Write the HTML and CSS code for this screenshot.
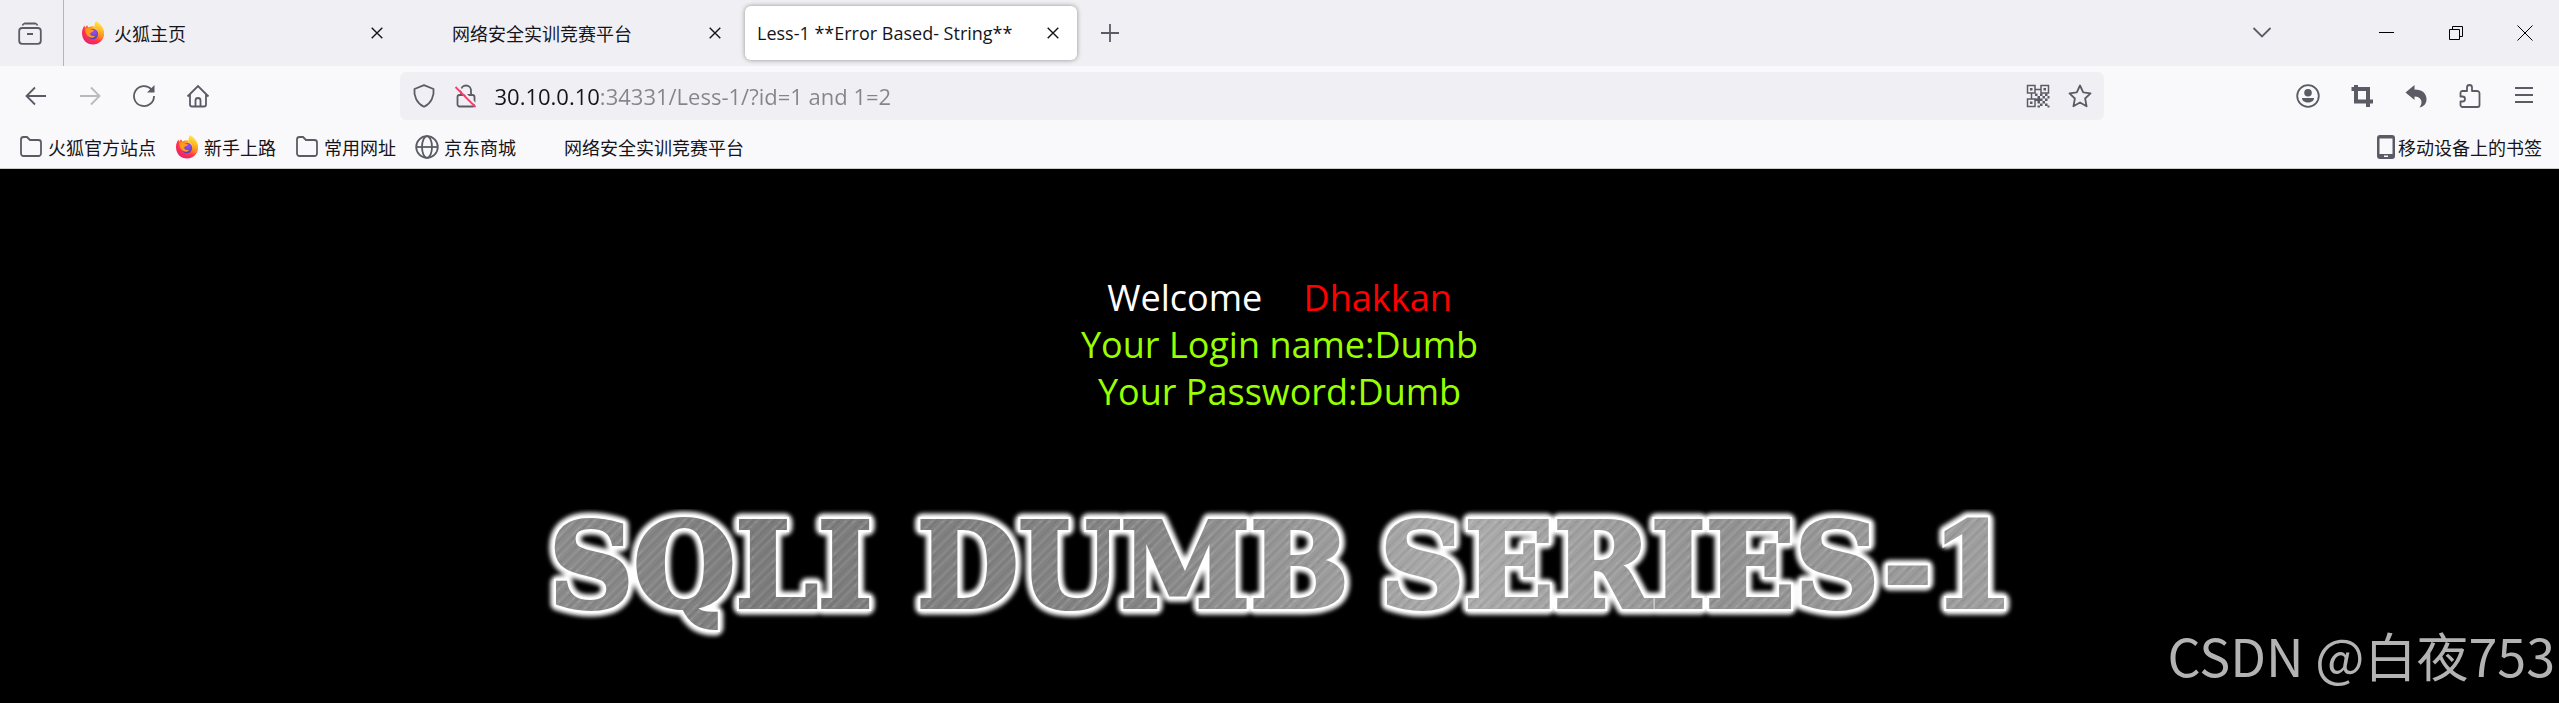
FILE: index.html
```
<!DOCTYPE html>
<html lang="zh-CN">
<head>
  <meta charset="UTF-8">
  <title>Less-1 **Error Based- String**</title>
  <meta name="viewport" content="width=device-width, initial-scale=1.0">
  <link rel="stylesheet" href="styles.css">
</head>

<body>

  <!-- Shared icons -->
  <svg class="sprite" width="0" height="0" aria-hidden="true">
    <defs>
      <radialGradient id="fox-body" cx="0.75" cy="0.15" r="1">
        <stop offset="0" stop-color="#fff44f"/>
        <stop offset="0.35" stop-color="#ff980e"/>
        <stop offset="0.65" stop-color="#ff3647"/>
        <stop offset="1" stop-color="#e31587"/>
      </radialGradient>
      <linearGradient id="fox-tail" x1="0.6" y1="0" x2="0.4" y2="1">
        <stop offset="0" stop-color="#fff44f"/>
        <stop offset="0.5" stop-color="#ffb31f"/>
        <stop offset="1" stop-color="#ff5634"/>
      </linearGradient>
      <radialGradient id="fox-globe" cx="0.6" cy="0.3" r="0.7">
        <stop offset="0" stop-color="#a34ce8"/>
        <stop offset="1" stop-color="#4b3fc4"/>
      </radialGradient>
    </defs>
    <symbol id="firefox" viewBox="0 0 24 24">
      <path fill="url(#fox-body)" d="M1 12C1 9 2 6.500 3.500 4.500L4 7L6 4.200L7.500 6.500C10 5 13 5 15 6L21 7C22.500 9 23 11 23 13C22.500 19 18 23.500 12 23.500S1 19 1 12z"/>
      <path fill="url(#fox-tail)" d="M15 0C19 2 23.500 7 23 13C22.500 17 20 19 17 20C20 15 18 10 14.500 7C13 5 13.500 2 15 0z"/>
      <circle cx="12" cy="13" r="5.200" fill="url(#fox-globe)"/>
      <path fill="#ff9a1e" d="M4 8C6 6 9 7 10 8.500L13 9C12.500 11 10 11 9.500 12C8.500 14 11 15.500 14 15C12 18.500 5 17 4 8z"/>
    </symbol>
    <symbol id="close" viewBox="0 0 12 12">
      <path d="M0.700 0.700L11.300 11.300M11.300 0.700L0.700 11.300" fill="none" stroke="currentColor" stroke-width="1.400"/>
    </symbol>
    <symbol id="folder" viewBox="0 0 24 24">
      <path d="M2 4.500a2.500 2.500 0 0 1 2.500-2.500h3.500l3 3h8.500a2.500 2.500 0 0 1 2.500 2.500v11a2.500 2.500 0 0 1-2.500 2.500h-15a2.500 2.500 0 0 1-2.500-2.500z" fill="none" stroke="currentColor" stroke-width="1.800"/>
    </symbol>
  </svg>

  <header class="browser">
    <div class="tab-bar">
      <button class="icon-btn all-tabs" aria-label="View tabs">
        <svg class="icon" viewBox="0 0 24 24"><path d="M4.500 4.500a3 3 0 0 1 2-2h11a3 3 0 0 1 2 2"/><rect x="1.200" y="7" width="21.600" height="15.800" rx="3"/><path d="M9 13h6" stroke-width="2"/></svg>
      </button>

      <div class="tabs">
        <div class="tab">
          <svg class="icon"><use href="#firefox"/></svg>
          <button class="tab-title">火狐主页</button>
          <button class="tab-close" aria-label="Close tab"><svg><use href="#close"/></svg></button>
        </div>
        <div class="tab indent">
          <button class="tab-title">网络安全实训竞赛平台</button>
          <button class="tab-close" aria-label="Close tab"><svg><use href="#close"/></svg></button>
        </div>
        <div class="tab active">
          <button class="tab-title">Less-1 **Error Based- String**</button>
          <button class="tab-close" aria-label="Close tab"><svg><use href="#close"/></svg></button>
        </div>
        <button class="icon-btn" aria-label="New tab">
          <svg class="icon" viewBox="0 0 24 24"><path d="M12 3v18M3 12h18"/></svg>
        </button>
      </div>

      <button class="icon-btn tab-list" aria-label="List all tabs">
        <svg class="icon" viewBox="0 0 24 24"><path d="M3.500 7l8.500 8.500L20.500 7"/></svg>
      </button>
      <div class="window-buttons">
        <button aria-label="Minimize"><svg viewBox="0 0 16 16"><path d="M0 7.500h15"/></svg></button>
        <button aria-label="Restore"><svg viewBox="0 0 16 16"><path d="M1.500 4.500h10v10h-10zM4.500 4.500v-3h10v10h-3"/></svg></button>
        <button aria-label="Close"><svg viewBox="0 0 16 16"><path d="M0.500 0.500l15 15M15.500 0.500l-15 15"/></svg></button>
      </div>
    </div>

    <div class="nav-bar">
      <div class="nav-buttons">
        <button class="icon-btn" aria-label="Back">
          <svg class="icon" viewBox="0 0 24 24"><path d="M22 12H3M11 3.500L2.500 12l8.500 8.500"/></svg>
        </button>
        <button class="icon-btn" aria-label="Forward" disabled>
          <svg class="icon" viewBox="0 0 24 24"><path d="M2 12h19M13 3.500l8.500 8.500-8.500 8.500"/></svg>
        </button>
        <button class="icon-btn" aria-label="Reload">
          <svg class="icon" viewBox="0 0 24 24"><path d="M19.500 5.500A10 10 0 1 0 22 12"/><path class="solid" d="M22.500 1v7.500H15z"/></svg>
        </button>
        <button class="icon-btn" aria-label="Home">
          <svg class="icon" viewBox="0 0 24 24"><path d="M1.500 12.500L12 2l10.500 10.500M4 10.500V20.500a2 2 0 0 0 2 2h12a2 2 0 0 0 2-2V10.500M9.500 22.500v-6a2.500 2.500 0 0 1 5 0v6"/></svg>
        </button>
      </div>

      <div class="url-bar">
        <svg class="icon" viewBox="0 0 24 24"><path d="M12 1.200L21.500 5C22.500 12 19 19.500 12 22.800C5 19.500 1.500 12 2.500 5z" stroke-linejoin="round"/></svg>
        <svg class="icon lock" viewBox="0 0 24 24"><path d="M7 11V6.500a5 5 0 0 1 10 0V11"/><rect x="3.500" y="11" width="17" height="11.500" rx="2"/><path class="gap" d="M4 2.500l19 19"/><path class="slash" d="M1.500 3l20 20"/></svg>
        <input class="url" type="text" aria-label="Address" value="30.10.0.10:34331/Less-1/?id=1 and 1=2">
        <svg class="icon qr" viewBox="0 0 24 24"><path d="M1.500 1.500h7.500v7.500H1.500zM15 1.500h7.500v7.500H15zM1.500 15h7.500v7.500H1.500zM9 5.500h6M5.500 9v6"/><path class="solid" d="M4 4h2.500v2.500H4zM17.500 4h2.500v2.500h-2.500zM4 17.500h2.500v2.500H4zM9 9.500h2.500v2.500H9zM14 9.500h2.500v2.500H14zM19 9.500h2.500v2.500H19zM11.500 12h2.500v2.500h-2.500zM16.500 12h2.500v2.500h-2.500zM21.500 12h2v2.500h-2zM9 14.500h5v2.500H9zM14 14.500h2.500v2.500H14zM19 14.500h2.500v2.500H19zM11.500 17h2.500v2.500h-2.500zM16.500 17h2.500v2.500h-2.500zM14 19.500h2.500v2.500H14zM19 19.500h2.500v2.500H19zM11.500 21.500h2.500v2h-2.500zM21.500 21.500h2v2h-2z"/></svg>
        <svg class="icon" viewBox="0 0 24 24"><path d="M12 1.500l3.200 6.900 7.300.900-5.400 5.200 1.500 7.800-6.600-3.800-6.600 3.800 1.500-7.800L1.500 9.300l7.300-.900z" stroke-linejoin="round"/></svg>
      </div>

      <div class="nav-tools">
        <button class="icon-btn" aria-label="Account">
          <svg class="icon" viewBox="0 0 24 24"><circle cx="12" cy="12" r="10.800"/><circle class="solid" cx="12" cy="8.800" r="3.800"/><path class="solid" d="M6 14h12c0 6-12 6-12 0z"/></svg>
        </button>
        <button class="icon-btn" aria-label="Screenshot">
          <svg class="icon" viewBox="0 0 24 24"><path d="M1.500 5H18v18M6 1v16.500h17" stroke-width="4"/></svg>
        </button>
        <button class="icon-btn" aria-label="Undo">
          <svg class="icon" viewBox="0 0 24 24"><path class="solid" d="M1.500 8.500L10.500 1v4.500c8 0 12 4 12 10 0 4-2.500 7-7 8 4-5 2-11-5-11V16z"/></svg>
        </button>
        <button class="icon-btn" aria-label="Extensions">
          <svg class="icon" viewBox="0 0 24 24"><path d="M9 7V3.500a2.500 2.500 0 0 1 5 0V7h5a2.500 2.500 0 0 1 2.500 2.500V21a2 2 0 0 1-2 2H4.500A2 2 0 0 1 2.500 21V17.500h2a2.500 2.500 0 0 0 0-5h-2V9a2 2 0 0 1 2-2z" stroke-linejoin="round"/></svg>
        </button>
        <button class="icon-btn" aria-label="Menu">
          <svg class="icon" viewBox="0 0 24 24"><path d="M3 4h18M3 11h18M3 18h18"/></svg>
        </button>
      </div>
    </div>

    <nav class="bookmarks">
      <a href="#"><svg class="icon"><use href="#folder"/></svg>火狐官方站点</a>
      <a href="#"><svg class="icon"><use href="#firefox"/></svg>新手上路</a>
      <a href="#"><svg class="icon"><use href="#folder"/></svg>常用网址</a>
      <a href="#"><svg class="icon" viewBox="0 0 24 24"><circle cx="12" cy="12" r="10.800"/><ellipse cx="12" cy="12" rx="5" ry="10.800"/><path d="M1 12h22"/></svg>京东商城</a>
      <a href="#" class="no-icon">网络安全实训竞赛平台</a>
      <a href="#" class="mobile"><svg class="icon" viewBox="0 0 20 24"><path class="solid" fill-rule="evenodd" d="M4 0h12a3 3 0 0 1 3 3v18a3 3 0 0 1-3 3H4a3 3 0 0 1-3-3V3a3 3 0 0 1 3-3zM3.500 3.500v15.500h13V3.500zM8 20.500v1.500h4v-1.500z"/></svg>移动设备上的书签</a>
    </nav>
  </header>

  <main class="page">
    <div class="welcome">
      <p>Welcome <span class="name">Dhakkan</span></p>
      <p class="login">Your Login name:Dumb</p>
      <p class="login">Your Password:Dumb</p>
    </div>

    <svg class="banner" viewBox="0 0 1500 140" role="img" aria-label="SQLI DUMB SERIES-1">
      <defs>
        <linearGradient id="steel" gradientUnits="userSpaceOnUse" x1="20" y1="0" x2="1490" y2="0">
          <stop offset="0" stop-color="#8c8c8c"/>
          <stop offset="0.150" stop-color="#7c7c7c"/>
          <stop offset="0.400" stop-color="#858585"/>
          <stop offset="0.620" stop-color="#acacac"/>
          <stop offset="0.800" stop-color="#929292"/>
          <stop offset="1" stop-color="#a0a0a0"/>
        </linearGradient>
        <pattern id="brushed" width="23" height="60" patternUnits="userSpaceOnUse" patternTransform="rotate(45)">
          <path d="M2 0v60M8 0v60M17 0v60" stroke="#fff" stroke-opacity="0.140"/>
          <path d="M5 0v60M13 0v60M20 0v60" stroke="#000" stroke-opacity="0.080"/>
        </pattern>
        <filter id="glow" x="-5%" y="-20%" width="110%" height="140%">
          <feGaussianBlur stdDeviation="2"/>
        </filter>
        <g id="words">
          <text x="19" y="98">SQLI</text>
          <text x="387" y="98">DUMB</text>
          <text x="850" y="98">SERIES-1</text>
        </g>
      </defs>
      <use href="#words" class="banner-glow" filter="url(#glow)"/>
      <use href="#words" class="banner-edge"/>
      <use href="#words" class="banner-face"/>
      <use href="#words" class="banner-brush"/>
    </svg>

    <div class="watermark">CSDN @白夜753</div>
  </main>

</body>
</html>
```

FILE: styles.css
```
:root {
  --tab-bg: #f0f0f4;
  --toolbar-bg: #f9f9fb;
  --text-color: #15141a;
  --icon-color: #5b5b66;
}

* {
  box-sizing: border-box;
}

body {
  margin: 0;
  min-height: 100vh;
  display: flex;
  flex-direction: column;
  background: #000;
  color: var(--text-color);
  font-family: "Open Sans", "Noto Sans CJK SC", sans-serif;
  font-size: 18px;
}

button {
  margin: 0;
  padding: 0;
  border: none;
  background: none;
  color: inherit;
  font: inherit;
}

.sprite {
  position: absolute;
}

.icon {
  width: 24px;
  height: 24px;
  flex-shrink: 0;
  fill: none;
  stroke: var(--icon-color);
  stroke-width: 1.8;
  color: var(--icon-color);
}

.icon use {
  stroke: none;
}

.icon .solid {
  fill: var(--icon-color);
  stroke: none;
}

.icon-btn {
  width: 54px;
  height: 48px;
  display: flex;
  align-items: center;
  justify-content: center;
}

.icon-btn:disabled {
  opacity: 0.4;
}

/* Tab strip */
.tab-bar {
  height: 66px;
  display: flex;
  align-items: center;
  background: var(--tab-bg);
}

.all-tabs {
  width: 64px;
  height: 66px;
  padding-right: 3px;
  border-right: 1px solid #b4b4ba;
}

.tabs {
  flex: 1;
  display: flex;
  align-items: center;
  gap: 6px;
  padding-left: 5px;
}

.tab {
  width: 332px;
  height: 54px;
  display: flex;
  align-items: center;
  gap: 9px;
  padding: 0 18px 0 12px;
  border-radius: 6px;
}

.tab.indent {
  padding-left: 45px;
}

.tab.active {
  background: #fff;
  box-shadow: 0 0 5px rgba(0, 0, 0, 0.4);
}

.tab-title {
  flex: 1;
  text-align: left;
  white-space: nowrap;
}

.tab-close {
  width: 12px;
  height: 12px;
  display: flex;
}

.tab-close svg {
  width: 12px;
  height: 12px;
}

.tab-list {
  margin-right: 63px;
}

.window-buttons {
  display: flex;
}

.window-buttons button {
  width: 69px;
  height: 66px;
}

.window-buttons svg {
  width: 16px;
  height: 16px;
  display: block;
  margin: 0 auto;
  fill: none;
  stroke: #000;
}

/* Navigation */
.nav-bar {
  display: flex;
  align-items: center;
  padding: 6px 8px 6px 9px;
  background: var(--toolbar-bg);
}

.nav-buttons {
  flex: 7;
  display: flex;
}

.nav-tools {
  flex: 8;
  display: flex;
  justify-content: flex-end;
}

.url-bar {
  width: 67%;
  height: 48px;
  display: flex;
  align-items: center;
  gap: 18px;
  padding: 0 12px;
  border-radius: 6px;
  background: var(--tab-bg);
}

.url {
  flex: 1;
  min-width: 0;
  height: 48px;
  margin-left: -2px;
  padding: 0;
  border: none;
  outline: none;
  font: 22px "Open Sans", sans-serif;
  /* host part dark, the rest of the address muted */
  color: transparent;
  background: linear-gradient(to right, #15141a 106px, #84848a 106px);
  -webkit-background-clip: text;
  background-clip: text;
}

.lock .gap {
  stroke: var(--tab-bg);
  stroke-width: 2;
}

.lock .slash {
  stroke: #ff3b6b;
}

.qr {
  stroke-width: 1.5;
}

/* Bookmarks */
.bookmarks {
  height: 43px;
  display: flex;
  align-items: center;
  gap: 19px;
  padding: 0 17px 0 19px;
  border-bottom: 1px solid #cccccc;
  background: var(--toolbar-bg);
}

.bookmarks a {
  display: flex;
  align-items: center;
  gap: 5px;
  color: inherit;
  text-decoration: none;
  white-space: nowrap;
}

.bookmarks .no-icon {
  padding-left: 29px;
}

.bookmarks .mobile {
  gap: 2px;
  margin-left: auto;
}

.mobile .icon {
  width: 20px;
}

/* Page */
.page {
  flex: 1;
  display: flex;
  flex-direction: column;
  align-items: center;
  position: relative;
  padding-top: 105px;
}

.welcome {
  color: #fff;
  font-size: 36px;
  line-height: 47px;
  text-align: center;
}

.welcome p {
  margin: 0;
}

.name {
  margin-left: 32px;
  color: #f00;
}

.login {
  color: #99ff00;
}

.banner {
  width: 1500px;
  max-width: 100%;
  margin-top: 94px;
}

.banner text {
  font-family: "DejaVu Serif", serif;
  font-size: 117px;
  font-weight: bold;
}

.banner-glow {
  fill: #fff;
  stroke: #fff;
  stroke-width: 15;
  stroke-linejoin: round;
}

.banner-edge {
  fill: #fff;
  stroke: #fff;
  stroke-width: 8;
}

.banner-face {
  fill: url(#steel);
  stroke: url(#steel);
  stroke-width: 4;
}

.banner-brush {
  fill: url(#brushed);
  stroke: url(#brushed);
  stroke-width: 4;
}

.watermark {
  position: absolute;
  right: 4px;
  bottom: 8px;
  color: #b3b3b3;
  font-family: "Noto Sans CJK SC", sans-serif;
  font-size: 52px;
  line-height: 80px;
}
```
